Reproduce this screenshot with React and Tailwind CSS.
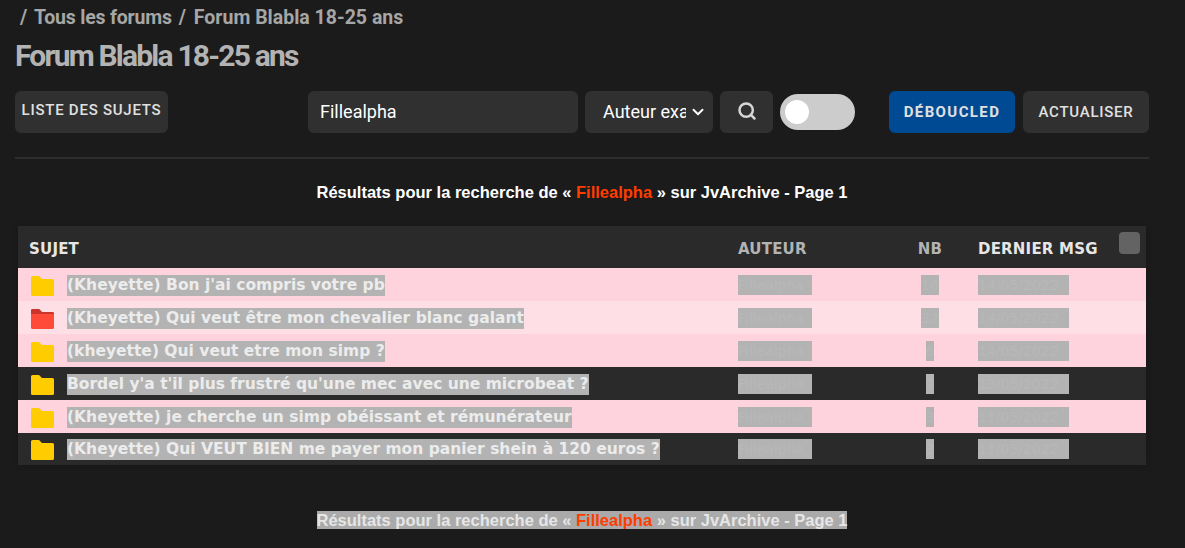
import { ChevronDown, Search } from "lucide-react";

const rows = [
  { title: "(Kheyette) Bon j'ai compris votre pb", nb: "16", date: "14/05/2022", bg: "bg-[#ffd3de]", folder: "#ffcc00" },
  { title: "(Kheyette) Qui veut être mon chevalier blanc galant", nb: "32", date: "14/05/2022", bg: "bg-[#ffdfe6]", folder: "#ff4a3a", hot: true },
  { title: "(kheyette) Qui veut etre mon simp ?", nb: "6", date: "14/05/2022", bg: "bg-[#ffd3de]", folder: "#ffcc00" },
  { title: "Bordel y'a t'il plus frustré qu'une mec avec une microbeat ?", nb: "7", date: "13/05/2022", bg: "bg-[#2a2a2a]", folder: "#ffcc00" },
  { title: "(Kheyette) je cherche un simp obéissant et rémunérateur", nb: "3", date: "11/05/2022", bg: "bg-[#ffd3de]", folder: "#ffcc00" },
  { title: "(Kheyette) Qui VEUT BIEN me payer mon panier shein à 120 euros ?", nb: "3", date: "11/05/2022", bg: "bg-[#2a2a2a]", folder: "#ffcc00" },
];

const Folder = ({ color, hot }) => (
  <svg width="23" height="20" viewBox="0 0 23 20" className="mt-[2px] shrink-0">
    <path d="M0 1.5 Q0 0 1.5 0 H8 L11 3 H21.5 Q23 3 23 4.5 V18.5 Q23 20 21.5 20 H1.5 Q0 20 0 18.5 Z" fill={color} />
    {hot && <path d="M0 1.5 Q0 0 1.5 0 H8 L11 3 H21.5 Q23 3 23 4.5 V5 H0 Z" fill="#c9352a" />}
  </svg>
);

const Selected = ({ children, className = "" }) => (
  <span className={`inline-block h-5 bg-[#b3b3b3] whitespace-pre ${className}`}>{children}</span>
);

export default function App() {
  return (
    <div className="h-[548px] overflow-hidden bg-[#1b1b1b] px-[15px] font-['Roboto',sans-serif]">
      <div className="flex h-[35px] items-center gap-[7px] pl-[5px] text-[19.5px] font-bold tracking-[-0.2px] text-[#a6a6a6]">
        <span>/</span>
        <span>Tous les forums</span>
        <span>/</span>
        <span className="ml-[1px] tracking-normal">Forum Blabla 18-25 ans</span>
      </div>
      <h1 className="mt-[3px] text-[30px] leading-[36px] font-bold tracking-[-1.8px] text-[#b3b3b3]">
        Forum Blabla 18-25 ans
      </h1>

      <div className="mt-[17px] flex h-[42px] w-[1134px] items-start">
        <button className="h-[42px] w-[153px] rounded-md bg-[#303030] pb-[3px] text-[15px] font-medium tracking-[0.75px] text-[#e0e0e0]">
          LISTE DES SUJETS
        </button>
        <div className="ml-[140px] flex h-[42px] w-[270px] items-center rounded-md bg-[#303030] pb-[2px] pl-3 text-[18px] text-white">
          Fillealpha
        </div>
        <div className="ml-[7px] flex h-[42px] w-[128px] items-center rounded-md bg-[#303030] pl-[18px] text-[18px] text-white">
          <span className="w-[83px] overflow-hidden pb-[2px] whitespace-nowrap">Auteur exact</span>
          <ChevronDown size={18} strokeWidth={2.5} className="ml-[3px] shrink-0 text-white" />
        </div>
        <div className="ml-[7px] flex h-[42px] w-[53px] items-center justify-center rounded-md bg-[#303030] pb-[2px]">
          <Search size={20} strokeWidth={3} className="text-[#d6d6d6]" />
        </div>
        <div className="mt-[3px] ml-[7px] flex h-9 w-[75px] items-center rounded-full bg-[#cccccc] pl-[5px]">
          <div className="h-6 w-[24px] rounded-full bg-white" />
        </div>
        <button className="ml-[34px] h-[42px] w-[126px] rounded-md bg-[#004a94] text-[15px] font-bold tracking-[1.4px] text-[#e0e0e0]">
          DÉBOUCLED
        </button>
        <button className="ml-2 h-[42px] w-[126px] rounded-md bg-[#303030] text-[15px] font-medium tracking-[0.75px] text-[#e0e0e0]">
          ACTUALISER
        </button>
      </div>

      <div className="mt-[24px] h-[2px] w-[1134px] bg-[#2e2e2e]" />

      <p className="mt-[23px] w-[1134px] text-center font-['Liberation_Sans',sans-serif] text-[16.5px] leading-5 font-bold text-white">
        Résultats pour la recherche de « <span className="text-[#ff3d00]">Fillealpha</span> » sur JvArchive - Page 1
      </p>

      <div className="mt-[24px] ml-[3px] w-[1128px] font-['DejaVu_Sans',sans-serif] shadow-[0_0_6px_rgba(0,0,0,0.2)]">
        <div className="relative flex h-[42px] items-center bg-[#2a2a2a] pt-1 text-[15px] font-bold tracking-[0.2px]">
          <div className="w-[720px] pl-[11px] text-[#e6e6e6]">SUJET</div>
          <div className="w-[160px] text-[#b3b3b3]">AUTEUR</div>
          <div className="w-[80px] pr-[16px] text-center text-[#b3b3b3]">NB</div>
          <div className="text-[#e6e6e6]">DERNIER MSG</div>
          <div className="absolute top-[6px] right-[6px] h-[22px] w-[21px] rounded-[4px] bg-[#636363]" />
        </div>
        {rows.map((row) => (
          <div key={row.title} className={`flex h-[33px] items-center last:h-[32px] ${row.bg}`}>
            <div className="flex w-[720px] items-center gap-[13px] pl-[13px]">
              <Folder color={row.folder} hot={row.hot} />
              <Selected className="mt-[1px] h-[21px] text-[15.5px] leading-[21px] font-bold text-[#ececec]">{row.title}</Selected>
            </div>
            <div className="w-[160px] text-[14px] leading-5 text-[#b8b8b8]">
              <Selected className="w-[74px] bg-[#aaaaaa]">Fillealpha</Selected>
            </div>
            <div className="w-[80px] pr-[16px] text-center text-[14px] leading-5 text-[#b8b8b8]">
              <Selected className="bg-[#aaaaaa]">{row.nb}</Selected>
            </div>
            <div className="text-[14px] leading-5 text-[#b8b8b8]">
              <Selected className="w-[91px] bg-[#aaaaaa]">{row.date}</Selected>
            </div>
          </div>
        ))}
      </div>

      <p className="mt-[43px] w-[1134px] text-center font-['Liberation_Sans',sans-serif] text-[16.5px] font-bold text-[#e6e6e6]">
        <span className="inline-block h-[18px] bg-[#aaaaaa] leading-[18px]">
          Résultats pour la recherche de « <span className="text-[#ff3d00]">Fillealpha</span> » sur JvArchive - Page 1
        </span>
      </p>
    </div>
  );
}
